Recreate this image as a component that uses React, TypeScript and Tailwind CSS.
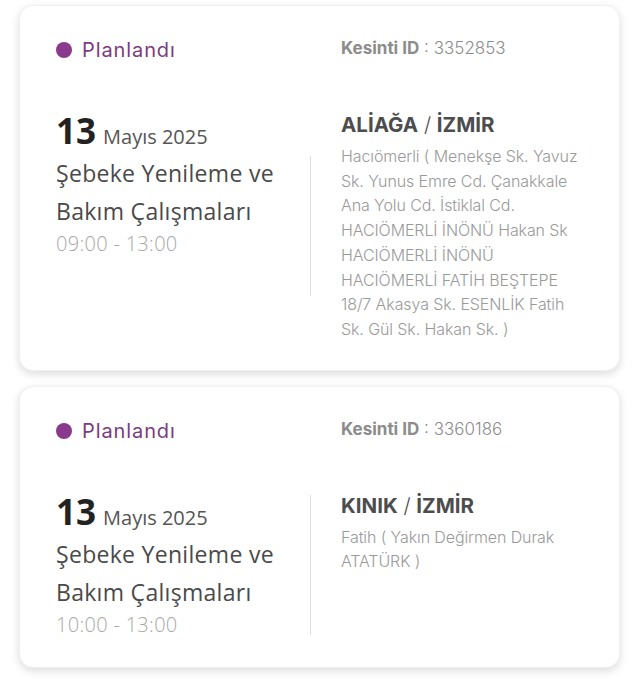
const outages = [
  {
    id: "3352853",
    status: "Planlandı",
    day: "13",
    monthYear: "Mayıs 2025",
    title: "Şebeke Yenileme ve Bakım Çalışmaları",
    time: "09:00 - 13:00",
    district: "ALİAĞA",
    city: "İZMİR",
    address:
      "Hacıömerli ( Menekşe Sk. Yavuz Sk. Yunus Emre Cd. Çanakkale Ana Yolu Cd. İstiklal Cd. HACIÖMERLİ İNÖNÜ Hakan Sk HACIÖMERLİ İNÖNÜ HACIÖMERLİ FATİH BEŞTEPE 18/7 Akasya Sk. ESENLİK Fatih Sk. Gül Sk. Hakan Sk. )",
  },
  {
    id: "3360186",
    status: "Planlandı",
    day: "13",
    monthYear: "Mayıs 2025",
    title: "Şebeke Yenileme ve Bakım Çalışmaları",
    time: "10:00 - 13:00",
    district: "KINIK",
    city: "İZMİR",
    address: "Fatih ( Yakın Değirmen Durak ATATÜRK )",
  },
];

const humanist = { fontFamily: '"Open Sans", "Noto Sans", sans-serif' };
const geo = { fontFamily: 'Inter, "Noto Sans", sans-serif' };

const App = () => {
  return (
    <div className="min-h-screen bg-white px-[19px] pt-[5px] pb-4 flex flex-col gap-[15px]">
      {outages.map((item) => (
        <section
          key={item.id}
          className="w-[601px] bg-white rounded-[14px] shadow-[0_3px_8px_rgba(0,0,0,0.14)] border border-[#f1f1f1] pl-[36px] pr-[30px] pt-[29px] pb-[28px]"
        >
          <div className="flex items-center">
            <div className="w-[285px] flex items-center gap-[10px]" style={geo}>
              <span className="w-[16px] h-[16px] rounded-full bg-[#8a3a8c]"></span>
              <span className="text-[20px] text-[#7c3b7f] tracking-[0.9px]">
                {item.status}
              </span>
            </div>
            <p className="text-[17px] text-[#8c8c8c] -mt-[2px]" style={geo}>
              <span className="font-bold">Kesinti ID</span>
              <span className="font-light"> : {item.id}</span>
            </p>
          </div>

          <div className="flex mt-[48px]">
            <div className="w-[254px] flex flex-col" style={humanist}>
              <div className="flex items-baseline gap-[7px]">
                <span className="text-[35px] leading-[36px] font-bold text-[#222]">
                  {item.day}
                </span>
                <span className="text-[20px] text-[#555]">{item.monthYear}</span>
              </div>
              <h2 className="text-[23px] leading-[38px] text-[#4a4a4a] tracking-[0.3px] mt-[2px]">
                {item.title}
              </h2>
              <p className="text-[20px] leading-[28px] font-light text-[#a8a8a8] tracking-[0.3px]">
                {item.time}
              </p>
            </div>
            <div className="w-px h-[140px] bg-[#dcdcdc] self-center -mt-[2px]"></div>
            <div className="flex-1 pl-[30px] flex flex-col" style={geo}>
              <h3 className="text-[20.5px] leading-[28px] text-[#4d4d4d] -mt-[2px]">
                <span className="font-bold">{item.district}</span>
                <span className="font-light"> / </span>
                <span className="font-bold">{item.city}</span>
              </h3>
              <p className="mt-[5px] max-w-[244px] text-[16px] leading-[24.7px] font-light text-[#9a9a9a] tracking-[-0.1px]">
                {item.address}
              </p>
            </div>
          </div>
        </section>
      ))}
    </div>
  );
};

export default App;
